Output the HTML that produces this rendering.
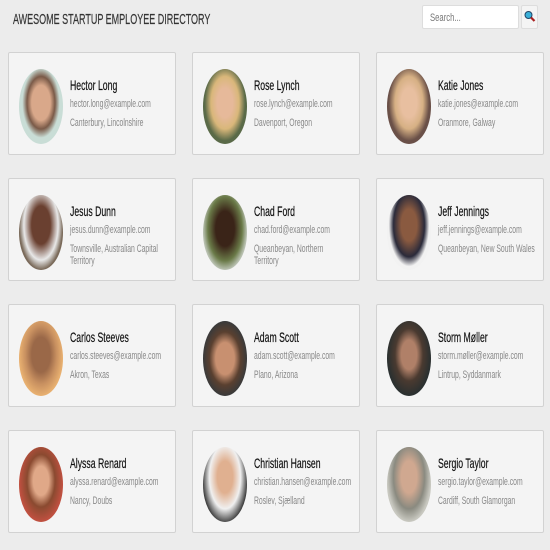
<!DOCTYPE html>
<html><head><style>
body{margin:0;width:550px;height:550px;background:#ececec;font-family:"Liberation Sans",sans-serif;position:relative;overflow:hidden}
h1{position:absolute;left:13px;top:11px;margin:0;font-size:15px;font-weight:normal;color:#333;transform:scaleX(.6);transform-origin:left top;white-space:nowrap;-webkit-text-stroke:.2px #333}
.search{position:absolute;left:422px;top:5px;width:97px;height:24px;background:#fff;border:1px solid #ddd;border-radius:2px;box-sizing:border-box}
.search span{position:absolute;left:7px;top:6px;font-size:11px;color:#777;transform:scaleX(.7);transform-origin:left top}
.btn{position:absolute;left:521px;top:5px;width:17px;height:24px;background:#f4f4f4;border:1px solid #ddd;box-sizing:border-box;border-radius:2px}
.card{position:absolute;width:168px;height:103px;background:#f4f4f4;border:1px solid #d2d2d2;border-radius:2px;box-sizing:border-box}
.ph{position:absolute;left:10px;top:16px;width:44px;height:75px;border-radius:50%}
.t{position:absolute;left:61px;transform:scaleX(.62);transform-origin:left top}
.n{top:24px;font-size:14px;color:#111;white-space:nowrap;-webkit-text-stroke:.2px #111}
.e{top:45px;font-size:11px;color:#888;white-space:nowrap}
.l{top:64px;font-size:11px;color:#888;line-height:12px;width:150px}
</style></head><body>
<h1>AWESOME STARTUP EMPLOYEE DIRECTORY</h1>
<div class="search"><span>Search...</span></div>
<div class="btn"><svg width="15" height="22" viewBox="0 0 15 22"><circle cx="6.5" cy="9" r="3.5" fill="#3ab0d8" stroke="#246" stroke-width="1"/><path d="M9 11.5l3.5 3.5" stroke="#a22" stroke-width="2.2"/></svg></div>

<div class="card" style="left:8px;top:52px"><div class="ph" style="background:radial-gradient(ellipse at 50% 45%,#d9a88a 30%,#7a5a48 45%,#c9ddd6 60%)"></div><div class="t n">Hector Long</div><div class="t e">hector.long@example.com</div><div class="t l">Canterbury, Lincolnshire</div></div>
<div class="card" style="left:192px;top:52px"><div class="ph" style="background:radial-gradient(ellipse at 50% 45%,#e6b99a 25%,#d9b77a 45%,#5a6a48 65%)"></div><div class="t n">Rose Lynch</div><div class="t e">rose.lynch@example.com</div><div class="t l">Davenport, Oregon</div></div>
<div class="card" style="left:376px;top:52px"><div class="ph" style="background:radial-gradient(ellipse at 50% 45%,#e8bfa0 25%,#d6b084 45%,#6a5048 65%)"></div><div class="t n">Katie Jones</div><div class="t e">katie.jones@example.com</div><div class="t l">Oranmore, Galway</div></div>

<div class="card" style="left:8px;top:178px"><div class="ph" style="background:radial-gradient(ellipse at 50% 40%,#6a4030 30%,#e8e8e8 55%,#7a6a5a 70%)"></div><div class="t n">Jesus Dunn</div><div class="t e">jesus.dunn@example.com</div><div class="t l">Townsville, Australian Capital Territory</div></div>
<div class="card" style="left:192px;top:178px"><div class="ph" style="background:radial-gradient(ellipse at 50% 45%,#3a2418 30%,#6a7a48 55%,#b8c0b0 70%)"></div><div class="t n">Chad Ford</div><div class="t e">chad.ford@example.com</div><div class="t l">Queanbeyan, Northern Territory</div></div>
<div class="card" style="left:376px;top:178px"><div class="ph" style="background:radial-gradient(ellipse at 50% 40%,#8a5a40 25%,#2a2a3a 50%,#f2f2f2 65%)"></div><div class="t n">Jeff Jennings</div><div class="t e">jeff.jennings@example.com</div><div class="t l" style="white-space:nowrap">Queanbeyan, New South Wales</div></div>

<div class="card" style="left:8px;top:304px"><div class="ph" style="background:radial-gradient(ellipse at 50% 45%,#9a6848 30%,#c89060 50%,#e8b070 70%)"></div><div class="t n">Carlos Steeves</div><div class="t e">carlos.steeves@example.com</div><div class="t l">Akron, Texas</div></div>
<div class="card" style="left:192px;top:304px"><div class="ph" style="background:radial-gradient(ellipse at 50% 50%,#c89070 30%,#5a4030 50%,#3a3a3a 70%)"></div><div class="t n">Adam Scott</div><div class="t e">adam.scott@example.com</div><div class="t l">Plano, Arizona</div></div>
<div class="card" style="left:376px;top:304px"><div class="ph" style="background:radial-gradient(ellipse at 50% 45%,#b08068 25%,#4a3a30 45%,#2a3030 70%)"></div><div class="t n">Storm Møller</div><div class="t e">storm.møller@example.com</div><div class="t l">Lintrup, Syddanmark</div></div>

<div class="card" style="left:8px;top:430px"><div class="ph" style="background:radial-gradient(ellipse at 50% 45%,#e0a888 25%,#8a4a30 45%,#c05040 70%)"></div><div class="t n">Alyssa Renard</div><div class="t e">alyssa.renard@example.com</div><div class="t l">Nancy, Doubs</div></div>
<div class="card" style="left:192px;top:430px"><div class="ph" style="background:radial-gradient(ellipse at 50% 40%,#e0b090 25%,#f0f0f0 50%,#2a2a2a 75%)"></div><div class="t n">Christian Hansen</div><div class="t e">christian.hansen@example.com</div><div class="t l">Roslev, Sjælland</div></div>
<div class="card" style="left:376px;top:430px"><div class="ph" style="background:radial-gradient(ellipse at 50% 40%,#d0a890 25%,#8a8a80 50%,#c8c8c0 70%)"></div><div class="t n">Sergio Taylor</div><div class="t e">sergio.taylor@example.com</div><div class="t l">Cardiff, South Glamorgan</div></div>
</body></html>
